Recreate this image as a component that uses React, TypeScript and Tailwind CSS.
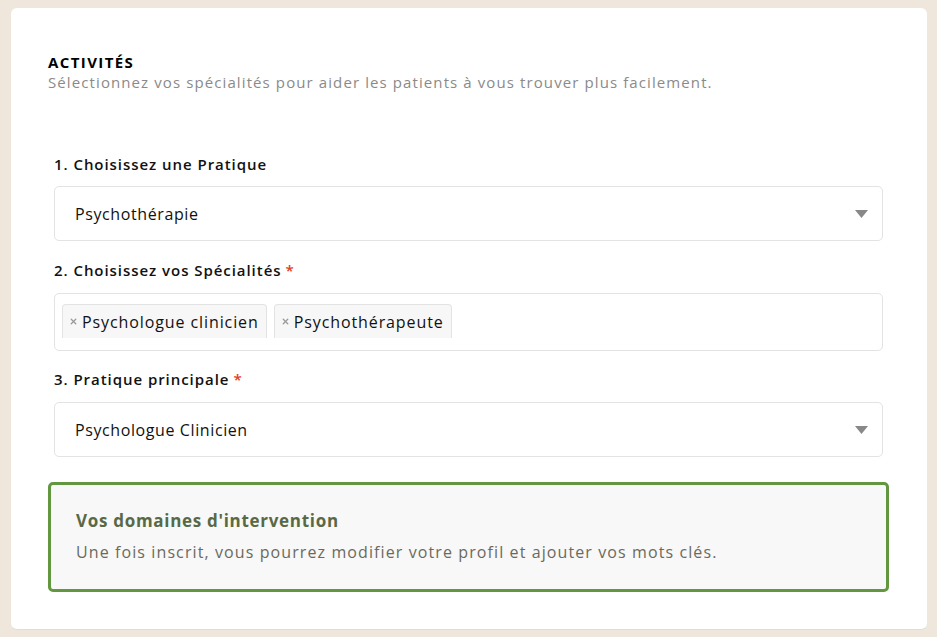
import { X } from 'lucide-react';

const font = { fontFamily: '"Open Sans", "Liberation Sans", sans-serif' };

function Caret() {
  return (
    <svg width="13" height="8" viewBox="0 0 13 8" className="shrink-0">
      <path d="M0 0 H13 L6.5 8 Z" fill="#888888" />
    </svg>
  );
}

function Label({ children, required }: { children: string; required?: boolean }) {
  return (
    <p className="text-[15px] font-semibold text-[#111] leading-[20px] tracking-[0.95px]">
      {children}
      {required && <span className="text-[#e2401c] ml-1">*</span>}
    </p>
  );
}

function Select({ value }: { value: string }) {
  return (
    <div className="h-[55px] border border-[#e3e3e3] rounded-[5px] flex items-center justify-between pl-[20px] pr-[14px] bg-white">
      <span className="text-[16px] text-[#111] tracking-[0.6px]">{value}</span>
      <Caret />
    </div>
  );
}

function Tag({ label }: { label: string }) {
  return (
    <div className="h-[34px] mt-[2px] self-start flex items-center gap-[4px] pl-[6px] pr-[7px] bg-[#f7f7f7] border border-b-0 border-[#e3e3e3] rounded-t-[4px]">
      <X size={9} strokeWidth={3.5} className="text-[#999]" />
      <span className="text-[16px] text-[#111] tracking-[0.9px]">{label}</span>
    </div>
  );
}

export default function App() {
  return (
    <div className="min-h-screen bg-[#efe7dc] pl-[11px] pr-[10px] pt-[8px] pb-[9px]" style={font}>
      <div className="bg-white rounded-[6px] border-b border-[#dcdcdc] pl-[37px] pr-[38px] pt-[45px] pb-[37px]">
        <h2 className="text-[15px] font-bold text-black leading-[19px] tracking-[1.4px]">ACTIVITÉS</h2>
        <p className="text-[15px] text-[#8a8a8a] leading-[20px] tracking-[1.1px]">
          Sélectionnez vos spécialités pour aider les patients à vous trouver plus facilement.
        </p>

        <div className="mx-[6px] mt-[62px] flex flex-col">
          <Label>1. Choisissez une Pratique</Label>
          <div className="mt-[12px]">
            <Select value="Psychothérapie" />
          </div>

          <div className="mt-[19px]">
            <Label required>2. Choisissez vos Spécialités</Label>
          </div>
          <div className="mt-[13px] h-[58px] border border-[#e3e3e3] rounded-[5px] flex items-start gap-[7px] pl-[7px] pt-[8px] overflow-hidden">
            <Tag label="Psychologue clinicien" />
            <Tag label="Psychothérapeute" />
          </div>

          <div className="mt-[18px]">
            <Label required>3. Pratique principale</Label>
          </div>
          <div className="mt-[13px]">
            <Select value="Psychologue Clinicien" />
          </div>
        </div>

        <div className="mt-[25px] border-[3px] border-[#629740] rounded-[5px] bg-[#f8f8f8] pl-[25px] pr-[25px] pt-[24px] pb-[25px]">
          <h3 className="text-[17px] font-bold text-[#5a6945] leading-[24px] tracking-[0.7px]">
            Vos domaines d'intervention
          </h3>
          <p className="mt-[7px] text-[16px] text-[#6b6a5c] leading-[24px] tracking-[1.1px]">
            Une fois inscrit, vous pourrez modifier votre profil et ajouter vos mots clés.
          </p>
        </div>
      </div>
    </div>
  );
}
